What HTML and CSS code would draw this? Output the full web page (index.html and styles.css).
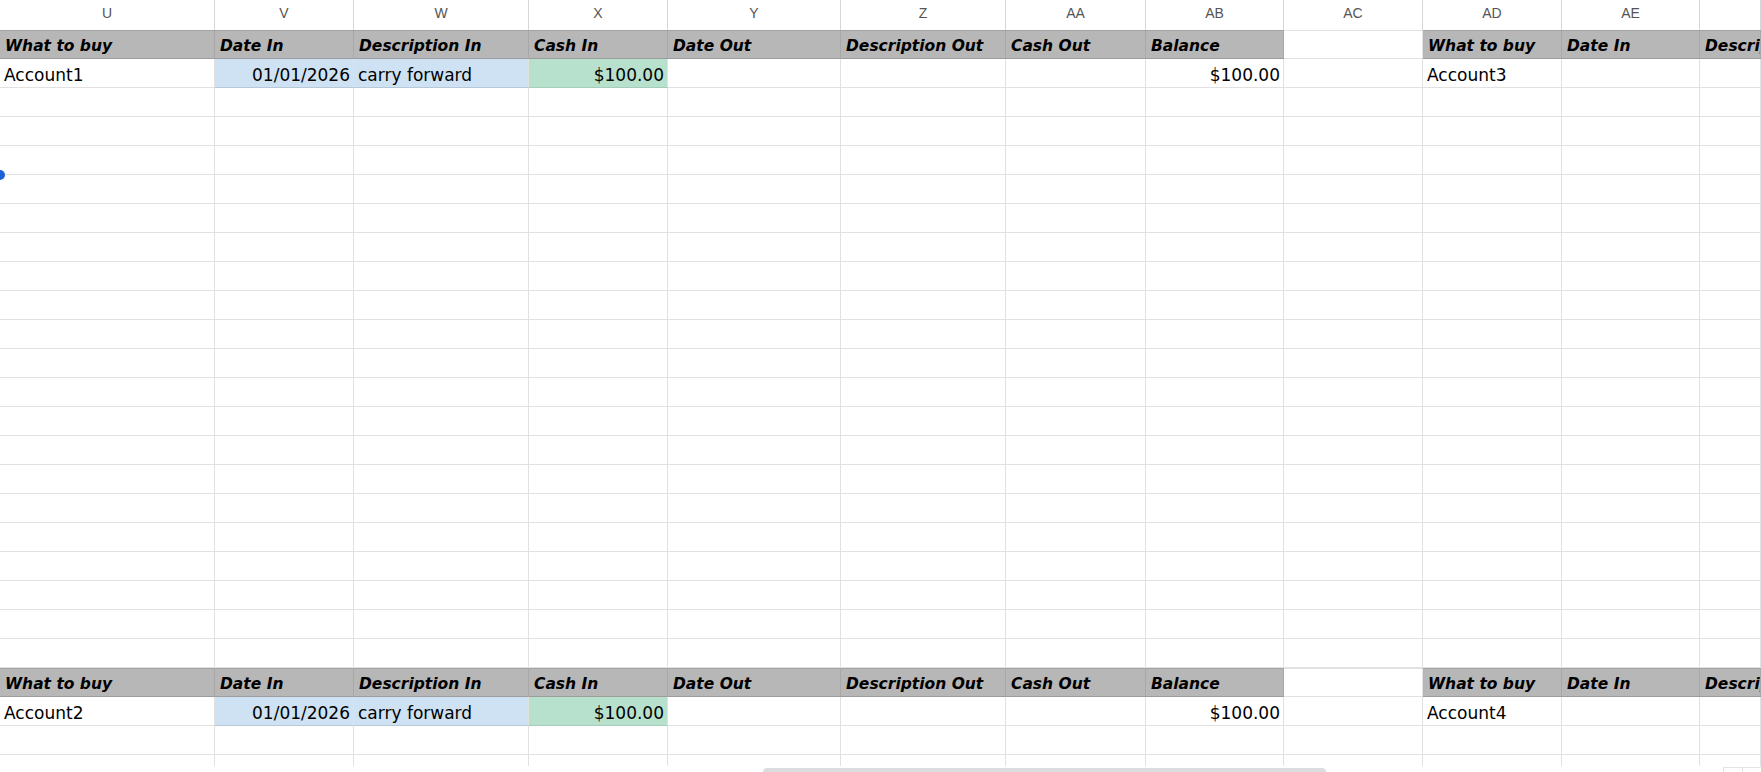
FILE: index.html
```html
<!DOCTYPE html>
<html>
<head>
<meta charset="utf-8">
<link rel="stylesheet" href="styles.css">
</head>
<body>
<div class="app">
  <div class="sheet">
    <div class="row letters">
      <span>U</span><span>V</span><span>W</span><span>X</span><span>Y</span><span>Z</span><span>AA</span><span>AB</span><span>AC</span><span>AD</span><span>AE</span><span></span>
    </div>
    <div class="row hdr">
      <span>What to buy</span><span>Date In</span><span>Description In</span><span>Cash In</span><span>Date Out</span><span>Description Out</span><span>Cash Out</span><span>Balance</span><span class="gap"></span><span>What to buy</span><span>Date In</span><span>Description In</span>
    </div>
    <div class="row">
      <span>Account1</span><span class="blue num">01/01/2026</span><span class="blue">carry forward</span><span class="green num">$100.00</span><span></span><span></span><span></span><span class="num">$100.00</span><span></span><span>Account3</span><span></span><span></span>
    </div>
    <!-- rows 3-12 -->
    <div class="row"><span></span><span></span><span></span><span></span><span></span><span></span><span></span><span></span><span></span><span></span><span></span><span></span></div>
    <div class="row"><span></span><span></span><span></span><span></span><span></span><span></span><span></span><span></span><span></span><span></span><span></span><span></span></div>
    <div class="row"><span></span><span></span><span></span><span></span><span></span><span></span><span></span><span></span><span></span><span></span><span></span><span></span></div>
    <div class="row"><span></span><span></span><span></span><span></span><span></span><span></span><span></span><span></span><span></span><span></span><span></span><span></span></div>
    <div class="row"><span></span><span></span><span></span><span></span><span></span><span></span><span></span><span></span><span></span><span></span><span></span><span></span></div>
    <div class="row"><span></span><span></span><span></span><span></span><span></span><span></span><span></span><span></span><span></span><span></span><span></span><span></span></div>
    <div class="row"><span></span><span></span><span></span><span></span><span></span><span></span><span></span><span></span><span></span><span></span><span></span><span></span></div>
    <div class="row"><span></span><span></span><span></span><span></span><span></span><span></span><span></span><span></span><span></span><span></span><span></span><span></span></div>
    <div class="row"><span></span><span></span><span></span><span></span><span></span><span></span><span></span><span></span><span></span><span></span><span></span><span></span></div>
    <div class="row"><span></span><span></span><span></span><span></span><span></span><span></span><span></span><span></span><span></span><span></span><span></span><span></span></div>
    <!-- rows 13-22 -->
    <div class="row"><span></span><span></span><span></span><span></span><span></span><span></span><span></span><span></span><span></span><span></span><span></span><span></span></div>
    <div class="row"><span></span><span></span><span></span><span></span><span></span><span></span><span></span><span></span><span></span><span></span><span></span><span></span></div>
    <div class="row"><span></span><span></span><span></span><span></span><span></span><span></span><span></span><span></span><span></span><span></span><span></span><span></span></div>
    <div class="row"><span></span><span></span><span></span><span></span><span></span><span></span><span></span><span></span><span></span><span></span><span></span><span></span></div>
    <div class="row"><span></span><span></span><span></span><span></span><span></span><span></span><span></span><span></span><span></span><span></span><span></span><span></span></div>
    <div class="row"><span></span><span></span><span></span><span></span><span></span><span></span><span></span><span></span><span></span><span></span><span></span><span></span></div>
    <div class="row"><span></span><span></span><span></span><span></span><span></span><span></span><span></span><span></span><span></span><span></span><span></span><span></span></div>
    <div class="row"><span></span><span></span><span></span><span></span><span></span><span></span><span></span><span></span><span></span><span></span><span></span><span></span></div>
    <div class="row"><span></span><span></span><span></span><span></span><span></span><span></span><span></span><span></span><span></span><span></span><span></span><span></span></div>
    <div class="row"><span></span><span></span><span></span><span></span><span></span><span></span><span></span><span></span><span></span><span></span><span></span><span></span></div>
    <div class="row hdr">
      <span>What to buy</span><span>Date In</span><span>Description In</span><span>Cash In</span><span>Date Out</span><span>Description Out</span><span>Cash Out</span><span>Balance</span><span class="gap"></span><span>What to buy</span><span>Date In</span><span>Description In</span>
    </div>
    <div class="row">
      <span>Account2</span><span class="blue num">01/01/2026</span><span class="blue">carry forward</span><span class="green num">$100.00</span><span></span><span></span><span></span><span class="num">$100.00</span><span></span><span>Account4</span><span></span><span></span>
    </div>
    <div class="row"><span></span><span></span><span></span><span></span><span></span><span></span><span></span><span></span><span></span><span></span><span></span><span></span></div>
    <div class="row"><span></span><span></span><span></span><span></span><span></span><span></span><span></span><span></span><span></span><span></span><span></span><span></span></div>
  </div>
  <div class="bottom">
    <div class="thumb"></div>
    <div class="nav"><span></span><span></span></div>
  </div>
  <div class="handle"></div>
</div>
</body>
</html>
```
FILE: styles.css
```css
html, body {
  margin: 0;
  padding: 0;
  background: #fff;
  overflow: hidden;
}
.app {
  position: relative;
  width: 1761px;
  height: 772px;
  overflow: hidden;
}
.sheet {
  height: 766px;
  overflow: hidden;
  display: flex;
  flex-direction: column;
}
.row {
  display: grid;
  grid-template-columns: 215px 139px 175px 139px 173px 165px 140px 138px 139px 139px 138px 1fr;
  height: 29px;
  flex: none;
}
.row > span {
  box-sizing: border-box;
  border-right: 1px solid #e1e1e1;
  border-bottom: 1px solid #e1e1e1;
  padding: 4px 4px 0;
  font-family: "DejaVu Sans", sans-serif;
  font-size: 17px;
  line-height: 24px;
  color: #000;
  white-space: nowrap;
  overflow: hidden;
}
.row > span.num {
  text-align: right;
  padding-right: 3px;
}
.row > span.blue {
  background: #cfe2f3;
  border-bottom-color: #b7c9d9;
}
.row > span.green {
  background: #b7e1cd;
  border-bottom-color: #a5cdb9;
}
.letters {
  height: 30px;
}
.letters > span {
  border-bottom: none;
  border-right-color: #d6d6d6;
  padding: 0;
  font-family: "Liberation Sans", Arial, sans-serif;
  font-size: 14px;
  line-height: 27px;
  text-align: center;
  color: #555;
}
.hdr > span {
  background: #b7b7b7;
  border-top: 1px solid #a3a3a3;
  border-bottom: 1px solid #9c9c9c;
  border-right-color: #a8a8a8;
  font-weight: bold;
  font-style: italic;
  font-size: 15.5px;
  line-height: 23px;
  padding-left: 5px;
}
.hdr > span.gap {
  background: #fff;
  border-top-color: #e1e1e1;
  border-bottom-color: #e1e1e1;
  border-right-color: #e1e1e1;
}
.bottom {
  height: 6px;
  display: flex;
  align-items: flex-end;
}
.thumb {
  margin-left: 763px;
  width: 563px;
  height: 4px;
  background: #dadce0;
  border-radius: 4px 4px 0 0;
}
.nav {
  margin-left: auto;
  display: flex;
  height: 5px;
}
.nav > span {
  width: 18px;
  border-left: 1px solid #e3e3e3;
  border-top: 1px solid #e3e3e3;
}
.handle {
  position: absolute;
  left: -5px;
  top: 170px;
  width: 10px;
  height: 10px;
  border-radius: 50%;
  background: #1a62d6;
}
```
